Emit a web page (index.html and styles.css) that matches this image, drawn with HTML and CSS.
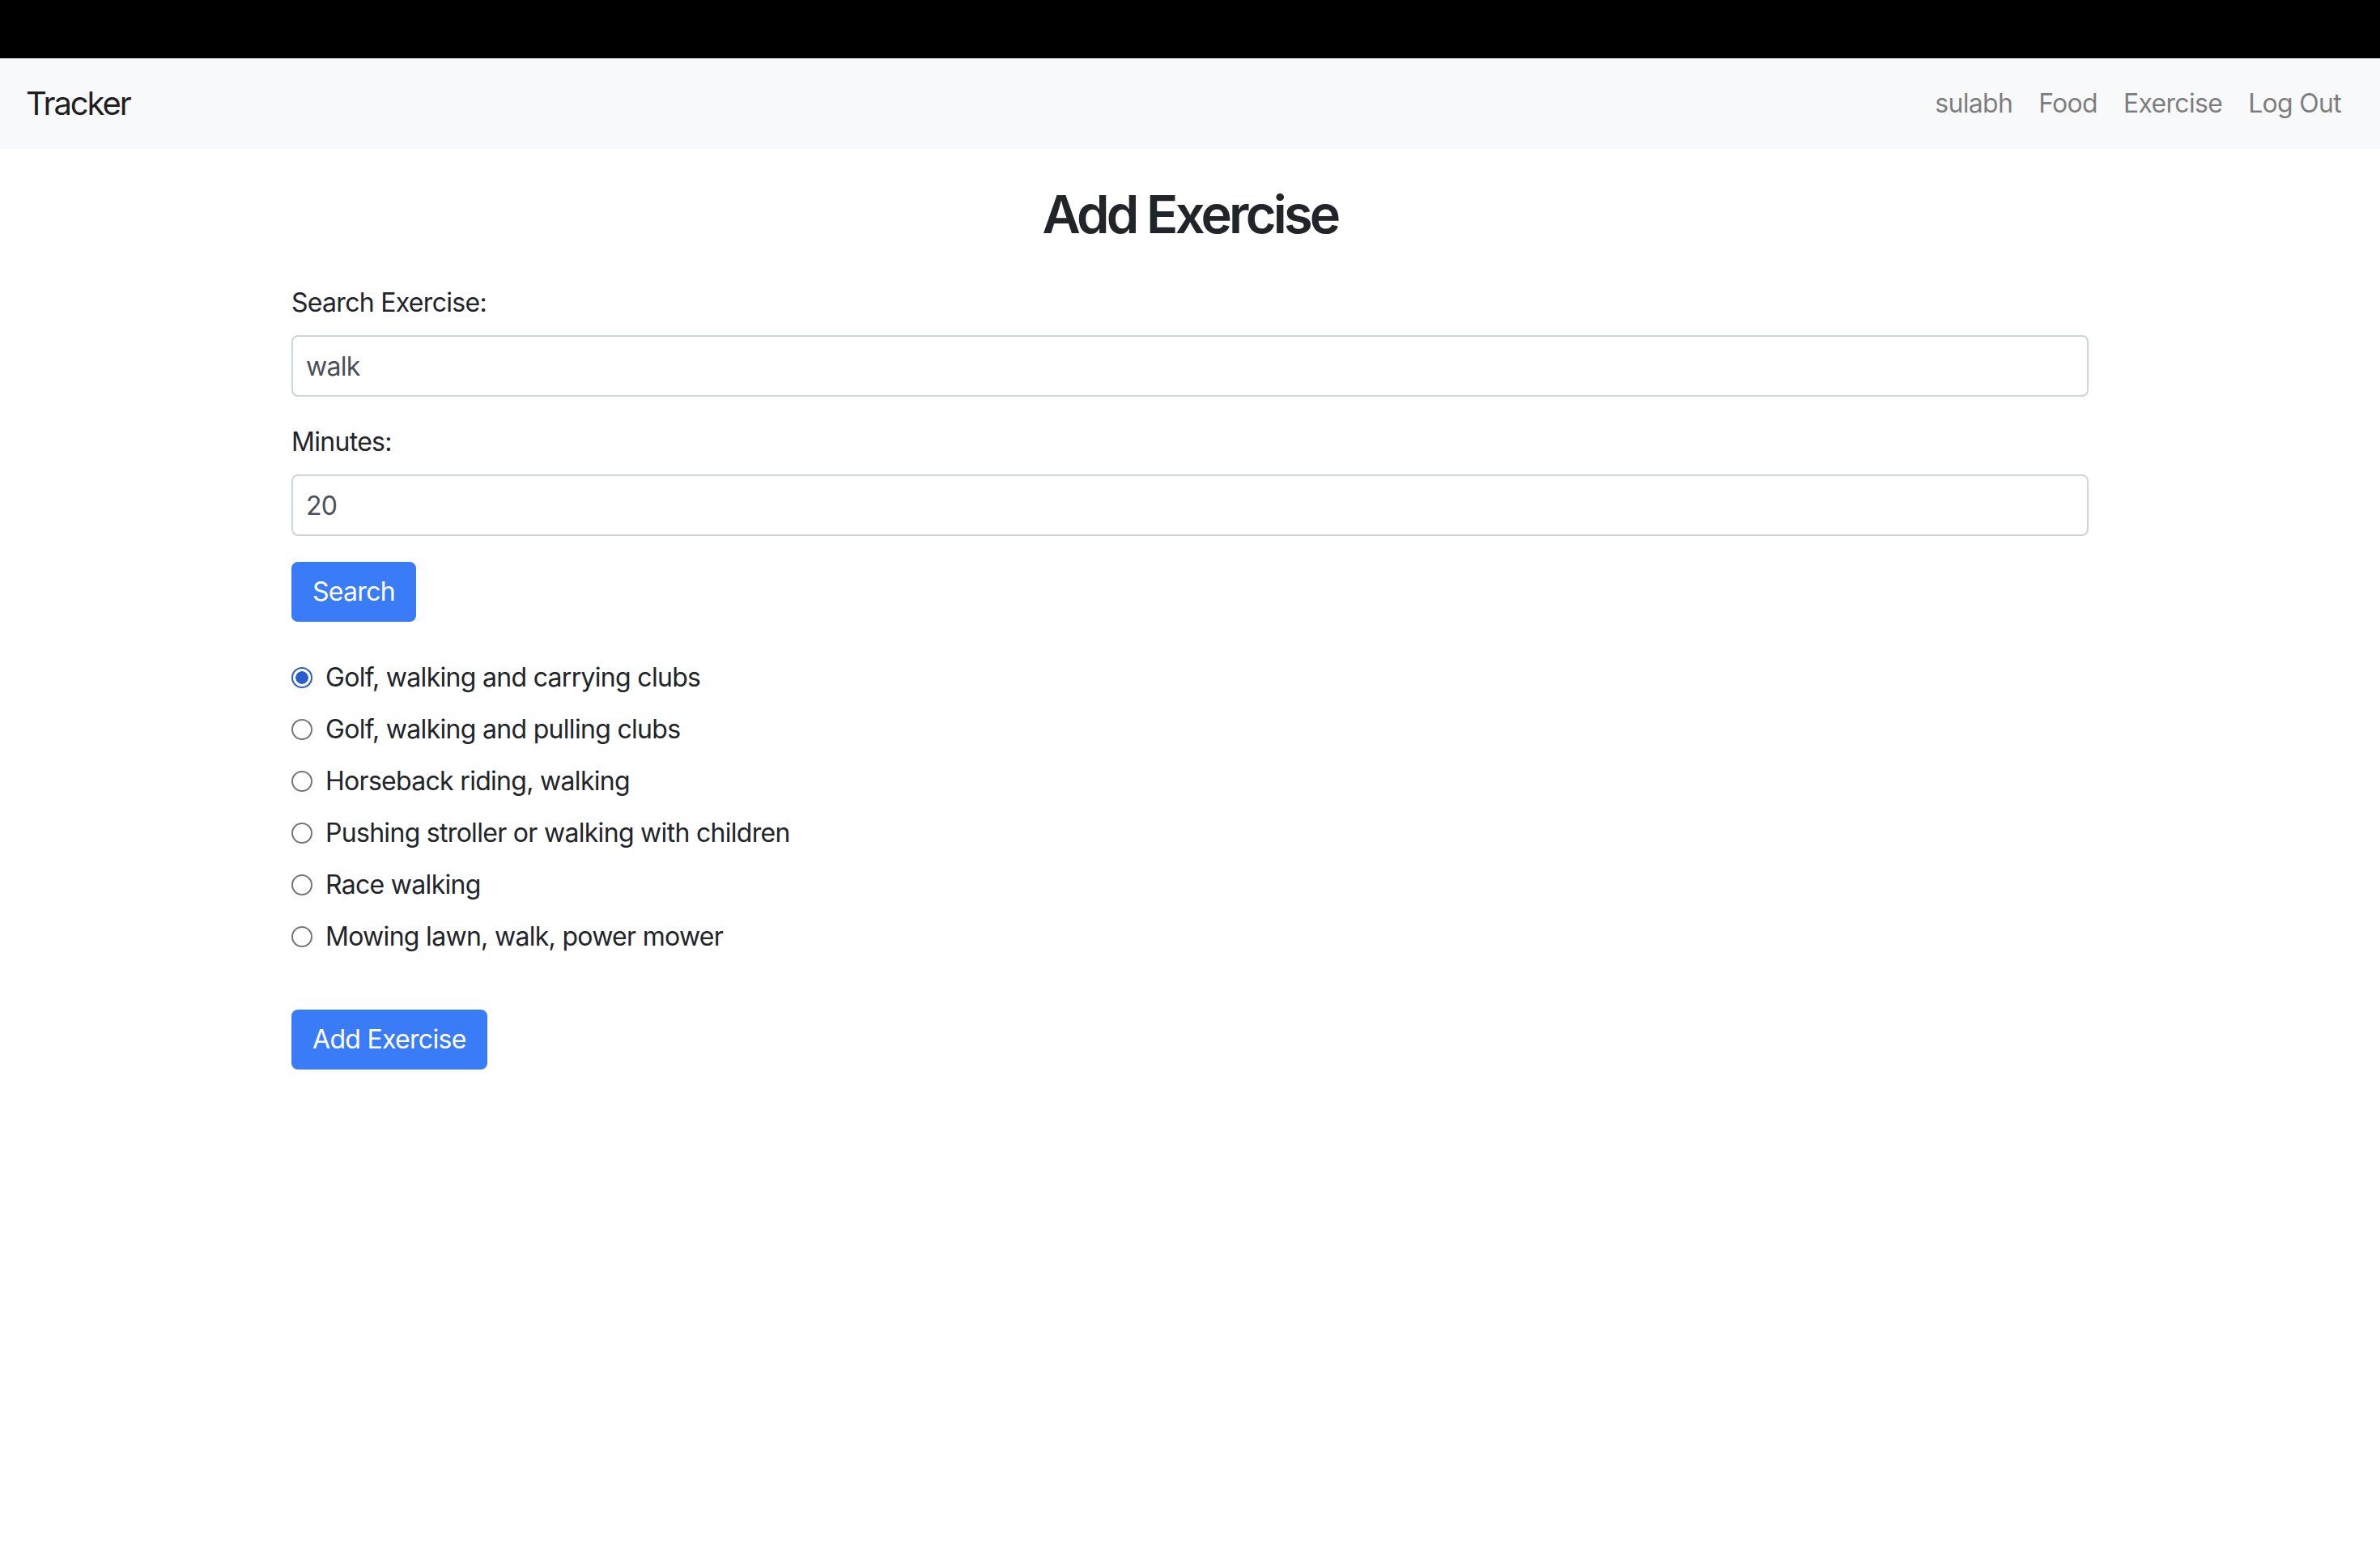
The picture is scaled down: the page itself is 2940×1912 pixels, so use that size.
FILE: index.html
```html
<!DOCTYPE html>
<html lang="en">
<head>
<meta charset="utf-8">
<title>Add Exercise</title>
<link rel="stylesheet" href="styles.css">
</head>
<body>
<div class="topbar"></div>
<nav class="navbar">
  <a class="brand" href="#">Tracker</a>
  <ul class="nav">
    <li><a class="nav-link" href="#">sulabh</a></li>
    <li><a class="nav-link" href="#">Food</a></li>
    <li><a class="nav-link" href="#">Exercise</a></li>
    <li><a class="nav-link" href="#">Log Out</a></li>
  </ul>
</nav>
<main class="container">
  <h1 class="title">Add Exercise</h1>
  <form class="search-form">
    <div class="group">
      <label class="field-label" for="q">Search Exercise:</label>
      <input class="control" id="q" type="text" value="walk">
    </div>
    <div class="group">
      <label class="field-label" for="m">Minutes:</label>
      <input class="control" id="m" type="text" value="20">
    </div>
    <button class="btn" type="button">Search</button>
  </form>
  <form class="add-form">
    <div class="options">
      <label class="option"><input class="radio" type="radio" name="ex" checked><span>Golf, walking and carrying clubs</span></label>
      <label class="option"><input class="radio" type="radio" name="ex"><span>Golf, walking and pulling clubs</span></label>
      <label class="option"><input class="radio" type="radio" name="ex"><span>Horseback riding, walking</span></label>
      <label class="option"><input class="radio" type="radio" name="ex"><span>Pushing stroller or walking with children</span></label>
      <label class="option"><input class="radio" type="radio" name="ex"><span>Race walking</span></label>
      <label class="option"><input class="radio" type="radio" name="ex"><span>Mowing lawn, walk, power mower</span></label>
    </div>
    <button class="btn" type="button">Add Exercise</button>
  </form>
</main>
</body>
</html>
```
FILE: styles.css
```css
* { box-sizing: border-box; }
html, body { margin: 0; padding: 0; }
body {
  font-family: Inter, "Noto Sans", "Liberation Sans", sans-serif;
  font-size: 32px;
  line-height: 1.5;
  letter-spacing: -0.7px;
  color: #212529;
  background: #ffffff;
  width: 2940px;
  min-height: 1912px;
}
.topbar { height: 72px; background: #000000; }
.navbar {
  height: 112px;
  background: #f8f9fa;
  padding: 16px 32px;
  display: flex;
  align-items: center;
  justify-content: space-between;
}
.brand {
  font-size: 40px;
  line-height: 60px;
  padding: 10px 0;
  letter-spacing: -2.1px;
  color: rgba(0,0,0,0.9);
  text-decoration: none;
}
.nav { list-style: none; margin: 0; padding: 0; display: flex; }
.nav-link {
  display: block;
  padding: 16px 16px;
  line-height: 48px;
  color: rgba(0,0,0,0.5);
  text-decoration: none;
}
.container { width: 2280px; margin: 0 auto; padding: 0 30px; }
.title {
  margin: 42px 0 46px;
  font-size: 65px;
  line-height: 1.2;
  font-weight: 600;
  letter-spacing: -3.8px;
  text-align: center;
}
.group { margin-bottom: 32px; }
.field-label { display: block; margin-bottom: 16px; line-height: 48px; }
.control {
  display: block;
  width: 100%;
  height: 76px;
  padding: 12px 16px;
  font: inherit;
  letter-spacing: inherit;
  color: #495057;
  background: #fff;
  border: 2px solid #ced4da;
  border-radius: 8px;
  outline: none;
}
.btn {
  display: inline-block;
  font: inherit;
  letter-spacing: inherit;
  line-height: 46px;
  padding: 12px 24px;
  color: #fff;
  background: #3a7cf7;
  border: 2px solid #3a7cf7;
  border-radius: 8px;
}
.add-form { margin-top: 45px; }
.options { display: flex; flex-direction: column; gap: 16px; margin-bottom: 66px; }
.option { display: flex; align-items: center; line-height: 48px; }
.radio {
  appearance: none;
  -webkit-appearance: none;
  flex: none;
  width: 26px;
  height: 26px;
  margin: 0 16px 0 0;
  border: 2px solid #767676;
  border-radius: 50%;
  background: #fff;
}
.radio:checked {
  border: 2px solid #2b5dcf;
  background: radial-gradient(circle, #2b5dcf 0 7.5px, #fff 8px);
}
```
